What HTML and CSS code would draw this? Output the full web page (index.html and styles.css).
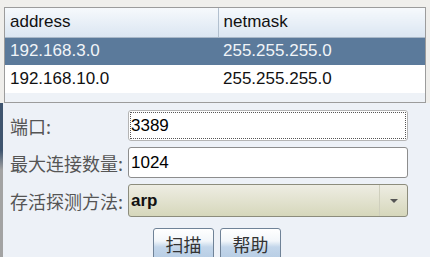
FILE: index.html
```html
<!DOCTYPE html>
<html lang="zh">
<head>
  <meta charset="UTF-8" />
  <meta name="viewport" content="width=device-width, initial-scale=1.0"/>
  <title>Scan</title>
  <link rel="stylesheet" href="styles.css">
</head>
<body>
  <div class="top-strip"></div>
  <div class="table-wrap">
    <table class="hosts">
      <thead>
        <tr><th class="col-addr">address</th><th>netmask</th></tr>
      </thead>
      <tbody>
        <tr class="selected"><td>192.168.3.0</td><td>255.255.255.0</td></tr>
        <tr><td>192.168.10.0</td><td>255.255.255.0</td></tr>
      </tbody>
    </table>
  </div>
  <div class="form">
    <div class="row">
      <label for="port">端口:</label>
      <input type="text" id="port" class="field focused" value="3389">
    </div>
    <div class="row">
      <label for="maxconn">最大连接数量:</label>
      <input type="text" id="maxconn" class="field" value="1024">
    </div>
    <div class="row">
      <label>存活探测方法:</label>
      <div class="select">
        <span class="select-value">arp</span>
        <span class="select-arrow"><span class="tri"></span></span>
      </div>
    </div>
    <div class="actions">
      <button class="btn">扫描</button>
      <button class="btn">帮助</button>
    </div>
  </div>
</body>
</html>
```

FILE: styles.css
```css
* {
  margin: 0;
  padding: 0;
  box-sizing: border-box;
}

html, body {
  width: 430px;
  height: 257px;
  overflow: hidden;
}

body {
  background-color: #efeeeb;
  font-family: "Liberation Sans", Arial, "Noto Sans CJK SC", sans-serif;
  font-size: 17px;
  color: #111;
}

.top-strip {
  height: 7px;
  background-color: #f0efec;
}

.table-wrap {
  margin-left: 4px;
  width: 422px;
  height: 96px;
  border: 1px solid #9c9c9c;
  background-color: #eef2f7;
}

.hosts {
  width: 100%;
  border-collapse: collapse;
  table-layout: fixed;
}

.hosts th {
  height: 29px;
  text-align: left;
  font-weight: normal;
  padding-left: 5px;
  background: linear-gradient(to bottom, #f6f9fc, #dbe6f2);
  border-bottom: 1px solid #a9b8c8;
}

.hosts th.col-addr {
  width: 213px;
  border-right: 1px solid #b2c0cf;
}

.hosts td {
  height: 28px;
  padding-left: 5px;
  background-color: #fff;
}

.hosts tr.selected td {
  background-color: #5b7a9b;
  color: #f0f4f8;
}

.form {
  height: 160px;
  background-color: #edf1f7;
  border-left: 3px solid;
  border-image: linear-gradient(to bottom, #3f556f 0, #3f556f 30%, #a3a3a3 42%, #a3a3a3 100%) 1;
  padding: 7px 0 0 7px;
}

.row {
  display: grid;
  grid-template-columns: 118px 280px;
  align-items: center;
  margin-bottom: 6px;
}

.row label {
  font-family: "Noto Sans CJK SC", sans-serif;
  font-size: 18px;
  color: #555;
}

.field {
  height: 31px;
  width: 280px;
  border: 1px solid #8d8d8d;
  border-radius: 3px;
  padding-left: 2px;
  font-family: "Liberation Sans", Arial, sans-serif;
  font-size: 17px;
  color: #000;
  background-color: #fff;
}

.field.focused {
  border-color: #b4b4b4;
  outline: 1px dotted #555;
  outline-offset: -3px;
}

.select {
  display: flex;
  height: 33px;
  width: 280px;
  border: 1px solid #8c8c7c;
  border-radius: 3px;
  background: linear-gradient(to bottom, #eeede3, #d6d7bb);
  overflow: hidden;
}

.select-value {
  flex: 1;
  padding-left: 2px;
  line-height: 31px;
  font-weight: bold;
  color: #111;
}

.select-arrow {
  width: 28px;
  border-left: 1px solid #cfcfbd;
  display: flex;
  align-items: center;
  justify-content: center;
}

.tri {
  width: 0;
  height: 0;
  border-left: 4px solid transparent;
  border-right: 4px solid transparent;
  border-top: 4px solid #555;
}

.actions {
  display: flex;
  gap: 6px;
  margin-left: 143px;
  margin-top: 11px;
}

.btn {
  width: 61px;
  height: 32px;
  border: 1px solid #6f8297;
  border-radius: 3px;
  background: linear-gradient(to bottom, #ffffff 0, #f2f6fa 40%, #c3d6ea 60%, #b7cde4 100%);
  font-family: "Noto Sans CJK SC", sans-serif;
  font-size: 18px;
  color: #333;
  line-height: 28px;
}
```
